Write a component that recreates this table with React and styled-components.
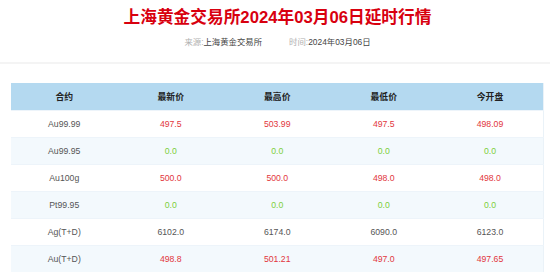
import React from "react";
import styled, { createGlobalStyle } from "styled-components";

const Global = createGlobalStyle`
  html, body { margin: 0; padding: 0; background: #fff; }
  body { font-family: "Liberation Sans", "Noto Sans CJK SC", sans-serif; }
`;

const Page = styled.div`
  width: 550px;
`;

const Header = styled.header`
  padding: 8px 6px 14px 11px;
  border-bottom: 2px solid #f4f4f4;
  text-align: center;
`;

const Title = styled.h1`
  margin: 0;
  font-size: 16.7px;
  line-height: 20px;
  font-weight: bold;
  color: #d8000f;
  font-family: "Liberation Sans", "Noto Sans CJK SC", sans-serif;
`;

const Meta = styled.div`
  margin-top: 8px;
  display: flex;
  justify-content: center;
  gap: 27px;
  font-size: 8.4px;
  line-height: 12px;
`;

const MetaItem = styled.span`
  color: #444;
`;

const MetaLabel = styled.span`
  color: #b0b0b0;
`;

const TableWrap = styled.div`
  padding: 19px 6px 0 11px;
`;

const Table = styled.table`
  width: 533px;
  border-collapse: collapse;
  table-layout: fixed;
  border-right: 1px solid #eaf2f8;
`;

const Th = styled.th`
  height: 27px;
  padding: 0;
  background: #b4d9f0;
  color: #222;
  font-size: 8.8px;
  font-weight: bold;
  text-align: center;
`;

const Tr = styled.tr`
  background: ${(p) => (p.$alt ? "#f3f9fd" : "#fff")};
  border-top: 1px solid #edf4fa;
`;

const Td = styled.td`
  height: 26px;
  padding: 0;
  text-align: center;
  font-size: 8.7px;
  color: ${(p) => p.$color || "#555"};
`;

const colors = { up: "#e2363c", zero: "#7ccf3a", flat: "#555" };

const rows = [
  ["Au99.99", "497.5", "503.99", "497.5", "498.09", "up"],
  ["Au99.95", "0.0", "0.0", "0.0", "0.0", "zero"],
  ["Au100g", "500.0", "500.0", "498.0", "498.0", "up"],
  ["Pt99.95", "0.0", "0.0", "0.0", "0.0", "zero"],
  ["Ag(T+D)", "6102.0", "6174.0", "6090.0", "6123.0", "flat"],
  ["Au(T+D)", "498.8", "501.21", "497.0", "497.65", "up"],
];

export default function App() {
  return (
    <Page>
      <Global />
      <Header>
        <Title>上海黄金交易所2024年03月06日延时行情</Title>
        <Meta>
          <MetaItem>
            <MetaLabel>来源:</MetaLabel>上海黄金交易所
          </MetaItem>
          <MetaItem>
            <MetaLabel>时间:</MetaLabel>2024年03月06日
          </MetaItem>
        </Meta>
      </Header>
      <TableWrap>
        <Table>
          <thead>
            <tr>
              <Th>合约</Th>
              <Th>最新价</Th>
              <Th>最高价</Th>
              <Th>最低价</Th>
              <Th>今开盘</Th>
            </tr>
          </thead>
          <tbody>
            {rows.map((r, i) => (
              <Tr key={r[0]} $alt={i % 2 === 1}>
                <Td>{r[0]}</Td>
                {r.slice(1, 5).map((v, j) => (
                  <Td key={j} $color={colors[r[5]]}>
                    {v}
                  </Td>
                ))}
              </Tr>
            ))}
          </tbody>
        </Table>
      </TableWrap>
    </Page>
  );
}
